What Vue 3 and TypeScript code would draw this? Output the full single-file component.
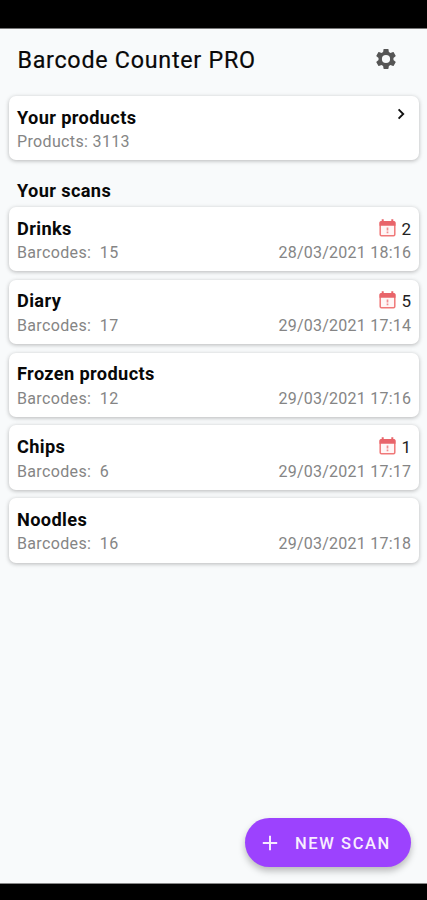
<script setup lang="ts">
interface Scan {
  name: string
  barcodes: number
  date: string
  expiring?: number
}

const productCount = 3113

const scans: Scan[] = [
  { name: 'Drinks', barcodes: 15, date: '28/03/2021 18:16', expiring: 2 },
  { name: 'Diary', barcodes: 17, date: '29/03/2021 17:14', expiring: 5 },
  { name: 'Frozen products', barcodes: 12, date: '29/03/2021 17:16' },
  { name: 'Chips', barcodes: 6, date: '29/03/2021 17:17', expiring: 1 },
  { name: 'Noodles', barcodes: 16, date: '29/03/2021 17:18' },
]
</script>

<template>
  <div class="screen">
    <div class="status-bar"></div>
    <main class="content">
      <header class="app-bar">
        <h1 class="app-title">Barcode Counter PRO</h1>
        <button class="settings" aria-label="Settings">
          <svg viewBox="0 0 24 24" width="24" height="24">
            <path
              fill="#555"
              d="M19.43 12.98c.04-.32.07-.64.07-.98s-.03-.66-.07-.98l2.11-1.65c.19-.15.24-.42.12-.64l-2-3.46c-.12-.22-.39-.3-.61-.22l-2.49 1c-.52-.4-1.08-.73-1.69-.98l-.38-2.65C14.46 2.18 14.25 2 14 2h-4c-.25 0-.46.18-.49.42l-.38 2.65c-.61.25-1.17.59-1.69.98l-2.49-1c-.23-.09-.49 0-.61.22l-2 3.46c-.13.22-.07.49.12.64l2.11 1.65c-.04.32-.07.65-.07.98s.03.66.07.98l-2.11 1.65c-.19.15-.24.42-.12.64l2 3.46c.12.22.39.3.61.22l2.49-1c.52.4 1.08.73 1.69.98l.38 2.65c.03.24.24.42.49.42h4c.25 0 .46-.18.49-.42l.38-2.65c.61-.25 1.17-.59 1.69-.98l2.49 1c.23.09.49 0 .61-.22l2-3.46c.12-.22.07-.49-.12-.64l-2.11-1.65zM12 16.1a4.1 4.1 0 1 1 0-8.2 4.1 4.1 0 0 1 0 8.2z"
            />
          </svg>
        </button>
      </header>

      <section class="card">
        <div class="row">
          <h2 class="name">Your products</h2>
          <svg class="chevron" viewBox="0 0 8 12" width="8" height="12">
            <path d="M1.6 1.4 6.2 6l-4.6 4.6" fill="none" stroke="#111" stroke-width="1.9" />
          </svg>
        </div>
        <div class="row">
          <span class="meta">Products: {{ productCount }}</span>
        </div>
      </section>

      <h2 class="name section-title">Your scans</h2>
      <div class="list">
        <article v-for="scan in scans" :key="scan.name" class="card">
          <div class="row">
            <h3 class="name">{{ scan.name }}</h3>
            <span v-if="scan.expiring" class="expiring">
              <svg viewBox="0 0 17 18" width="17" height="18">
                <rect x="1.2" y="3" width="14.6" height="13.8" rx="1.2" fill="#fff6f6" stroke="#f07878" stroke-width="1.5" />
                <path d="M.5 6.8V3.6q0-1.6 1.6-1.6h12.8q1.6 0 1.6 1.6v3.2z" fill="#e8646a" />
                <path d="M3.7.2v3M13.3.2v3" stroke="#e8646a" stroke-width="2" />
                <path d="M8.5 8.4v3.1M8.5 12.6v1.6" stroke="#f08b8d" stroke-width="1.7" />
              </svg>
              <span class="count">{{ scan.expiring }}</span>
            </span>
          </div>
          <div class="row">
            <span class="meta">Barcodes:&nbsp; {{ scan.barcodes }}</span>
            <time class="meta date">{{ scan.date }}</time>
          </div>
        </article>
      </div>

      <button class="fab">
        <svg viewBox="0 0 16 16" width="16" height="16">
          <path d="M8 .8v14.4M.8 8h14.4" stroke="#f6eaff" stroke-width="2" />
        </svg>
        <span class="fab-label">NEW SCAN</span>
      </button>
    </main>
    <div class="nav-bar"></div>
  </div>
</template>

<style>
body {
  background: #000;
}
</style>

<style scoped>
.screen {
  display: flex;
  flex-direction: column;
  height: 900px;
  font-family: Roboto, 'Liberation Sans', sans-serif;
  color: #080808;
  background: #000;
}
.status-bar {
  flex: none;
  height: 28px;
  border-bottom: 1px solid #777;
}
.nav-bar {
  flex: none;
  height: 16px;
  border-top: 1px solid #888;
}
.content {
  flex: 1;
  display: flex;
  flex-direction: column;
  box-sizing: border-box;
  min-height: 0;
  padding: 0 8px 16px 9px;
  background: #f8fafb;
}
.app-bar {
  display: flex;
  align-items: center;
  justify-content: space-between;
  height: 60px;
  margin-bottom: 7px;
  padding: 0 21px 0 8.4px;
}
h1,
h2,
h3 {
  margin: 0;
}
button {
  border: 0;
  font: inherit;
}
.app-title {
  padding-top: 2px;
  font-size: 23.3px;
  font-weight: 400;
  letter-spacing: 0.73px;
  -webkit-text-stroke: 0.2px #080808;
}
.settings {
  display: flex;
  margin-top: -1px;
  padding: 0;
  background: none;
}
.card {
  box-sizing: border-box;
  height: 64.4px;
  padding: 9.6px 8px 0;
  border-radius: 7px;
  background: #fff;
  box-shadow: 0 1px 4px rgba(0, 0, 0, 0.27);
}
.row {
  display: flex;
  align-items: center;
  justify-content: space-between;
  height: 24px;
}
.name {
  font-size: 18.2px;
  font-weight: 700;
  letter-spacing: 0.37px;
  line-height: 24px;
}
.meta {
  font-size: 16px;
  font-weight: 400;
  letter-spacing: 0.35px;
  color: #858585;
}
.date {
  margin-right: -0.3px;
  letter-spacing: 0.24px;
}
.chevron {
  margin: -7px 6.5px 0 0;
}
.section-title {
  margin: 18.3px 8px 4.3px;
}
.list {
  display: flex;
  flex-direction: column;
  gap: 8.45px;
}
.expiring {
  display: flex;
  align-items: center;
  gap: 5px;
}
.expiring svg {
  margin-top: -2px;
}
.count {
  font-size: 17px;
  color: #222;
}
.fab {
  display: flex;
  align-items: center;
  align-self: flex-end;
  gap: 17.5px;
  box-sizing: border-box;
  width: 166px;
  height: 49px;
  margin: auto 8px 0 0;
  padding: 0 0 0 16.5px;
  border-radius: 25px;
  background: #9c42fe;
  color: #f8eeff;
  box-shadow: 0 4px 7px rgba(0, 0, 0, 0.26);
}
.fab-label {
  padding-top: 1px;
  font-size: 16.5px;
  font-weight: 500;
  letter-spacing: 1.6px;
}
</style>
